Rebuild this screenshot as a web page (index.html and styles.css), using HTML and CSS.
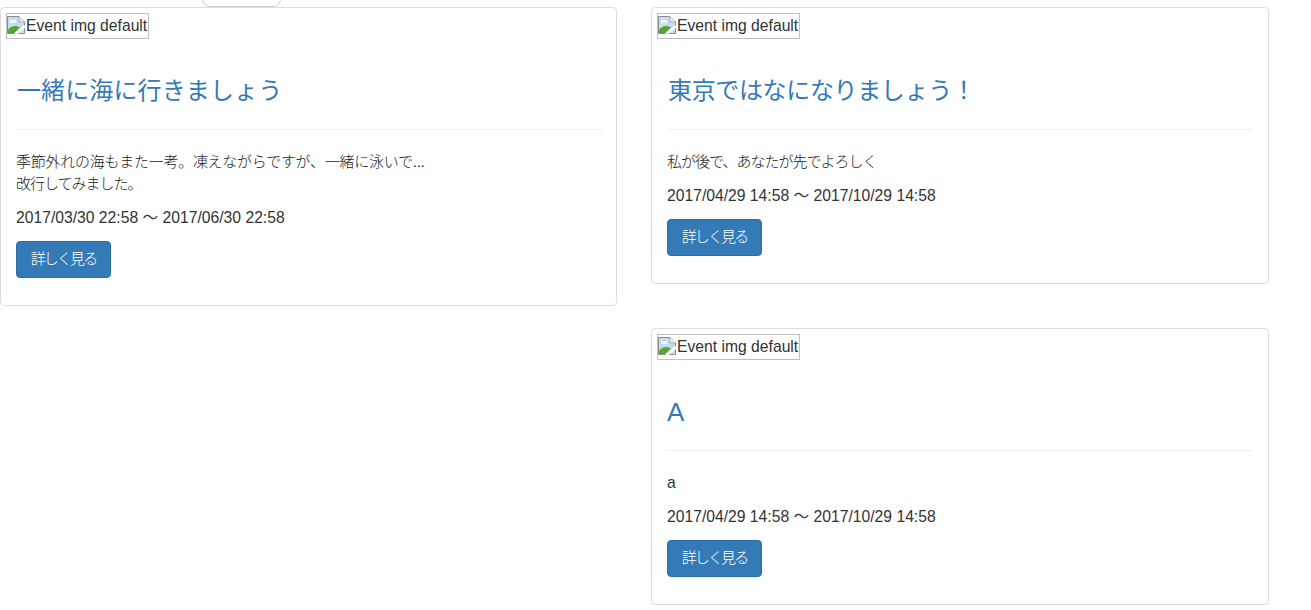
FILE: index.html
```html
<!DOCTYPE html>
<html lang="ja">
<head>
<meta charset="utf-8">
<title>イベント一覧</title>
<link rel="stylesheet" href="styles.css">
</head>
<body>
<div class="top-tab"></div>
<main class="board">
  <section class="column column-left">
    <article class="card">
      <div class="broken-img">
        <svg class="broken-icon" width="18" height="18" viewBox="0 0 18 18"><path d="M.5.500H12L17.500 6V17.500H.500Z" fill="#c4dcf4" stroke="#8c8c8c"/><path d="M12 .500V6H17.500" fill="#f2f2f2" stroke="#a8a8a8"/><path d="M3 4h6v3H3z" fill="#fff" opacity=".8"/><path d="M1 17V14C4 9.500 9 9 13 11.500L7.500 17Z" fill="#55a532"/><path d="M8 18.500L18 10" stroke="#fff" stroke-width="2.500"/></svg><span>Event img default</span>
      </div>
      <div class="caption">
        <h3 class="title title-wide"><a href="#">一緒に海に行きましょう</a></h3>
        <hr class="rule">
        <p class="desc"><span class="cjk-loose">季節外れの海もまた一考。凍えながらですが、一緒に泳いで...</span><br><span class="cjk-tight">改行してみました。</span></p>
        <p class="date">2017/03/30 22:58 〜 2017/06/30 22:58</p>
        <a class="btn" href="#">詳しく見る</a>
      </div>
    </article>
  </section>
  <section class="column column-right">
    <article class="card">
      <div class="broken-img">
        <svg class="broken-icon" width="18" height="18" viewBox="0 0 18 18"><path d="M.5.500H12L17.500 6V17.500H.500Z" fill="#c4dcf4" stroke="#8c8c8c"/><path d="M12 .500V6H17.500" fill="#f2f2f2" stroke="#a8a8a8"/><path d="M3 4h6v3H3z" fill="#fff" opacity=".8"/><path d="M1 17V14C4 9.500 9 9 13 11.500L7.500 17Z" fill="#55a532"/><path d="M8 18.500L18 10" stroke="#fff" stroke-width="2.500"/></svg><span>Event img default</span>
      </div>
      <div class="caption">
        <h3 class="title title-tight"><a href="#">東京ではなになりましょう！</a></h3>
        <hr class="rule">
        <p class="desc"><span class="cjk-tight">私が後で、あなたが先でよろしく</span></p>
        <p class="date">2017/04/29 14:58 〜 2017/10/29 14:58</p>
        <a class="btn" href="#">詳しく見る</a>
      </div>
    </article>
    <article class="card">
      <div class="broken-img">
        <svg class="broken-icon" width="18" height="18" viewBox="0 0 18 18"><path d="M.5.500H12L17.500 6V17.500H.500Z" fill="#c4dcf4" stroke="#8c8c8c"/><path d="M12 .500V6H17.500" fill="#f2f2f2" stroke="#a8a8a8"/><path d="M3 4h6v3H3z" fill="#fff" opacity=".8"/><path d="M1 17V14C4 9.500 9 9 13 11.500L7.500 17Z" fill="#55a532"/><path d="M8 18.500L18 10" stroke="#fff" stroke-width="2.500"/></svg><span>Event img default</span>
      </div>
      <div class="caption">
        <h3 class="title title-latin"><a href="#">A</a></h3>
        <hr class="rule">
        <p class="desc desc-latin">a</p>
        <p class="date">2017/04/29 14:58 〜 2017/10/29 14:58</p>
        <a class="btn" href="#">詳しく見る</a>
      </div>
    </article>
  </section>
</main>
</body>
</html>
```
FILE: styles.css
```css
* { box-sizing: border-box; }
html, body { height: 100%; }
body {
  margin: 0;
  background: #fff;
  color: #333;
  font-family: "Liberation Sans", "Noto Sans CJK JP", sans-serif;
  font-size: 15.7px;
  line-height: 22px;
  overflow: hidden;
}
.top-tab {
  position: absolute;
  left: 202px;
  top: -10px;
  width: 79px;
  height: 17px;
  background: #fff;
  border: 1px solid #ccc;
  border-radius: 8px;
}
.board {
  display: flex;
  gap: 34px;
  padding: 7px 42px 0 0;
}
.column {
  display: flex;
  flex-direction: column;
  gap: 44px;
}
.column-left { width: 617px; }
.column-right { width: 618px; }
.card {
  border: 1px solid #ddd;
  border-radius: 4px;
  padding: 5px 5px 27px;
  background: #fff;
}
.broken-img {
  display: flex;
  align-items: center;
  width: 143px;
  height: 26px;
  border: 1px solid #c0c0c0;
  white-space: nowrap;
}
.broken-icon {
  flex: none;
  display: block;
  margin: 2px 1px 0 0;
  align-self: flex-start;
}
.caption { padding: 0 9px 0 10px; }
.column-right .caption { padding-right: 11px; }
.title {
  margin: 39px 0 0;
  font-size: 24px;
  font-weight: 400;
  line-height: 26px;
}
.title a { color: #337ab7; text-decoration: none; }
.title-wide { letter-spacing: .12px; padding-left: 1px; }
.title-tight { letter-spacing: -.35px; padding-left: 1px; }
.title-latin { font-size: 26px; }
.rule {
  margin: 25px 0 21px;
  border: 0;
  border-top: 1px solid #eee;
}
.desc {
  margin: 0 0 12px;
  color: #222;
  font-size: 15px;
  font-weight: 300;
}
.desc-latin {
  color: #333;
  font-size: 15.7px;
  font-weight: 400;
}
.cjk-loose { letter-spacing: -.26px; }
.cjk-tight { letter-spacing: -1px; }
.date { margin: 0 0 12px; }
.btn {
  display: block;
  width: 95px;
  height: 37px;
  border: 1px solid #2e6da4;
  border-radius: 4px;
  background: #337ab7;
  color: #fff;
  font-size: 15px;
  font-weight: 300;
  letter-spacing: -1.9px;
  line-height: 34px;
  text-align: center;
  text-decoration: none;
}
```
